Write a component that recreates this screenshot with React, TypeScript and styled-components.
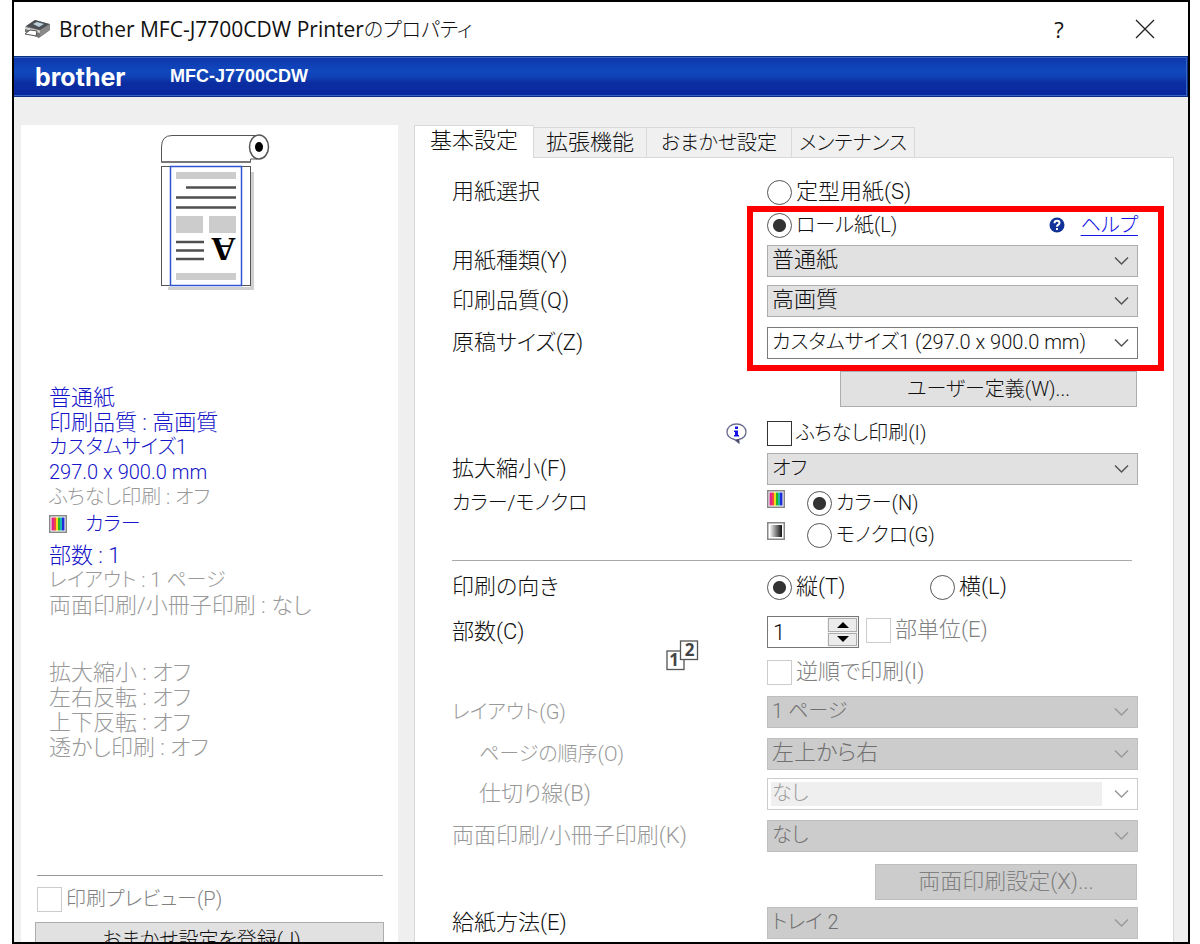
import React, { useState } from "react";
import styled, { createGlobalStyle, css } from "styled-components";

const ink = "#111";
const faded = "#999";
const accent = "#1414c8";

const GlobalStyle = createGlobalStyle`
  *, *::before, *::after { box-sizing: border-box; }
  html, body { margin: 0; background: #fff; }
  body, button, input, select {
    font-family: Roboto, "Noto Sans CJK JP", sans-serif;
    font-size: 22px;
    font-weight: 300;
    font-feature-settings: "palt";
    color: ${ink};
  }
`;

const kanaSize = css<{ $kana?: boolean }>`
  font-size: ${(p) => (p.$kana ? "20px" : "22px")};
`;

const Window = styled.div`
  display: flex;
  flex-direction: column;
  height: 100vh;
  margin: 0 10px 0 12px;
  border: 2px solid #000;
  overflow: hidden;
  background: #efefef;
`;

const TitleBar = styled.header`
  display: flex;
  flex: none;
  align-items: center;
  height: 54px;
  padding: 0 32px 0 10px;
  background: #fff;
`;

const Title = styled.h1`
  flex: 1;
  margin: 0 0 0 8px;
  font-family: "Open Sans", "Noto Sans CJK JP", sans-serif;
  font-size: 21px;
  font-weight: 400;
  line-height: 30px;
`;

const TitleKana = styled.span`
  font-size: 20px;
  font-weight: 300;
`;

const CaptionButton = styled.button`
  display: grid;
  place-items: center;
  width: 22px;
  height: 30px;
  margin-left: 64px;
  padding: 0;
  border: 0;
  background: none;
  font-family: "Open Sans", sans-serif;
  font-weight: 400;
`;

const BrandBar = styled.div`
  display: flex;
  flex: none;
  align-items: center;
  gap: 47px;
  height: 41px;
  padding-left: 21px;
  border: 1px solid #0b2f86;
  border-left: 0;
  box-shadow: inset -1px 1px 0 #3565c0, inset 0 -1px 0 #3565c0;
  background: linear-gradient(#0f35aa 0%, #1048be 35%, #1040b4 52%, #0b2ea2 65%, #0a279c 100%);
  color: #fff;
`;

const BrandLogo = styled.span`
  width: 88px;
  font-family: Inter, sans-serif;
  font-size: 25px;
  font-weight: 700;
  line-height: 30px;
`;

const ModelName = styled.span`
  font-family: "Liberation Sans", sans-serif;
  font-size: 18px;
  font-weight: 700;
`;

const Content = styled.div`
  display: grid;
  grid-template-columns: 377px minmax(0, 1fr);
  gap: 16px;
  flex: 1;
  padding: 28px 14px 0 7px;
`;

const Sidebar = styled.aside`
  padding: 8px 14px 0;
  background: #fff;
`;

const Preview = styled.svg`
  display: block;
  width: 112px;
  height: 160px;
  margin-left: 124px;
`;

const Summary = styled.ul`
  margin: 92px 0 0 14px;
  padding: 0;
  list-style: none;
`;

const SummaryLine = styled.li<{ $active?: boolean; $spaced?: boolean; $kana?: boolean }>`
  ${kanaSize}
  height: 25px;
  margin-top: ${(p) => (p.$spaced ? "42px" : "0")};
  line-height: 25px;
  white-space: nowrap;
  color: ${(p) => (p.$active ? accent : faded)};
`;

const ColorLine = styled(SummaryLine)`
  display: flex;
  align-items: center;
  gap: 18px;
  height: 28px;
  margin-bottom: 5px;
`;

const SideRule = styled.hr`
  height: 1px;
  margin: 115px 1px 7px 2px;
  border: 0;
  background: #999;
`;

const Main = styled.main`
  display: flex;
  flex-direction: column;
`;

const Tabs = styled.div`
  display: flex;
  align-items: flex-end;
  height: 32px;
`;

const Tab = styled.button<{ $active?: boolean; $width: number; $kana?: boolean }>`
  ${kanaSize}
  width: ${(p) => p.$width}px;
  height: 30px;
  padding: 0;
  border: 1px solid #d9d9d9;
  border-width: 1px 1px 0 0;
  background: #f0f0f0;
  line-height: 28px;
  white-space: nowrap;
  ${(p) =>
    p.$active &&
    css`
      position: relative;
      height: 33px;
      margin-bottom: -1px;
      padding-bottom: 2px;
      border-left-width: 1px;
      background: #fff;
    `}
`;

const Panel = styled.form`
  flex: 1;
  padding: 18px 35px 0 37px;
  border: 1px solid #d9d9d9;
  border-bottom: 0;
  background: #fff;
`;

const Row = styled.div<{ $gap?: number }>`
  display: grid;
  grid-template-columns: 315px minmax(0, 1fr);
  align-items: center;
  min-height: 32px;
  margin-top: ${(p) => p.$gap ?? 0}px;
`;

const FieldLabel = styled.label<{ $faded?: boolean; $indent?: boolean; $kana?: boolean }>`
  ${kanaSize}
  padding-left: ${(p) => (p.$indent ? "27px" : "0")};
  line-height: 32px;
  white-space: nowrap;
  color: ${(p) => (p.$faded ? faded : ink)};
`;

const Highlighted = styled.section`
  position: relative;
  &::after {
    content: "";
    position: absolute;
    z-index: 1;
    top: -3px;
    right: -26px;
    bottom: -12px;
    left: 295px;
    border: 6px solid #f00;
    pointer-events: none;
  }
`;

const SelectBox = styled.div`
  position: relative;
  svg {
    position: absolute;
    top: 11px;
    right: 9px;
    pointer-events: none;
  }
`;

const StyledSelect = styled.select<{ $plain?: boolean; $kana?: boolean }>`
  ${kanaSize}
  display: block;
  appearance: none;
  width: 100%;
  height: 32px;
  padding: 0 36px 3px 4px;
  border: 1px solid ${(p) => (p.$plain ? "#7a7a7a" : "#adadad")};
  border-radius: 0;
  background: ${(p) => (p.$plain ? "#fff" : "#e1e1e1")};
  opacity: 1;
  &:disabled {
    border-color: ${(p) => (p.$plain ? "#ccc" : "#bfbfbf")};
    color: ${(p) => (p.$plain ? "#9a9a9a" : "#707070")};
    background: ${(p) =>
      p.$plain
        ? "linear-gradient(#efefef, #efefef) 3px 3px / calc(100% - 38px) calc(100% - 6px) no-repeat #fff"
        : "#ccc"};
  }
`;

const PushButton = styled.button<{ $width?: string; $kana?: boolean }>`
  ${kanaSize}
  display: block;
  width: ${(p) => p.$width ?? "100%"};
  height: 36px;
  margin: 0 1px 0 auto;
  padding: 0;
  border: 1px solid #adadad;
  background: #e1e1e1;
  line-height: 32px;
  white-space: nowrap;
  &:disabled {
    border-color: #bfbfbf;
    background: #ccc;
    color: #808080;
  }
`;

const SideButton = styled(PushButton)`
  width: 100%;
  margin: 7px 0 0;
  padding-right: 16px;
`;

const Choice = styled.label<{ $faded?: boolean; $kana?: boolean }>`
  ${kanaSize}
  display: flex;
  align-items: center;
  gap: 4px;
  height: 32px;
  line-height: 32px;
  white-space: nowrap;
  color: ${(p) => (p.$faded ? "#808080" : ink)};
`;

const SideChoice = styled(Choice)`
  margin-left: 2px;
`;

const Radio = styled.input.attrs({ type: "radio" })`
  appearance: none;
  flex: none;
  width: 25px;
  height: 25px;
  margin: 0;
  border: 1px solid #555;
  border-radius: 50%;
  background: #fff;
  &:checked {
    background: radial-gradient(circle, #333 0 6px, #fff 7px);
  }
`;

const Tick = styled.input.attrs({ type: "checkbox" })`
  appearance: none;
  flex: none;
  width: 25px;
  height: 25px;
  margin: 0;
  border: 1px solid #333;
  background: #fff;
  &:checked {
    background: #333;
    box-shadow: inset 0 0 0 5px #fff;
  }
  &:disabled {
    border-color: #ccc;
  }
`;

const SpreadRow = styled.div`
  display: flex;
  align-items: center;
  justify-content: space-between;
`;

const HelpArea = styled.span`
  display: flex;
  align-items: center;
  gap: 16px;
`;

const HelpLink = styled.a`
  color: #1414e6;
  font-size: 20px;
  line-height: 28px;
  text-decoration-thickness: 1px;
  text-underline-offset: 3px;
`;

const NoteCell = styled.span`
  display: flex;
  justify-content: flex-end;
  padding-right: 20px;
`;

const ColorChoice = styled.div`
  display: flex;
  align-items: flex-start;
  gap: 22px;
  > svg {
    margin-top: 3px;
  }
`;

const Rule = styled.hr`
  height: 1px;
  margin: 9px 6px 0 0;
  border: 0;
  background: #aaa;
`;

const OrientationChoices = styled.div`
  display: grid;
  grid-template-columns: 163px 1fr;
`;

const CopiesGrid = styled.div`
  display: grid;
  grid-template-columns: 315px minmax(0, 1fr);
  margin-top: 13px;
`;

const CopiesCell = styled.div`
  display: flex;
  justify-content: space-between;
  align-items: flex-start;
  padding-right: 68px;
  svg {
    margin-top: 24px;
  }
`;

const CopiesControls = styled.div`
  display: flex;
  flex-direction: column;
  align-items: flex-start;
  gap: 8px;
`;

const CopiesLine = styled.div`
  display: flex;
  align-items: flex-start;
  gap: 7px;
`;

const CollateChoice = styled(Choice)`
  height: 28px;
  line-height: 28px;
`;

const Spinner = styled.div`
  display: flex;
  width: 92px;
  height: 32px;
  border: 1px solid #777;
  background: #fff;
`;

const CopiesInput = styled.input`
  flex: 1;
  width: 0;
  padding: 0 0 0 5px;
  border: 0;
  outline: 0;
  background: none;
`;

const SpinButtons = styled.div`
  display: grid;
  gap: 1px;
  width: 31px;
  padding: 1px;
  background: #f4f4f4;
`;

const SpinButton = styled.button`
  display: grid;
  place-items: center;
  padding: 0;
  border: 1px solid #adadad;
  background: #ececec;
`;

const PrinterIcon = () => (
  <svg width="27" height="20" viewBox="0 0 27 20" aria-hidden="true">
    <path d="M1 8 11 1 26 5 26 11 15 19 1 13Z" fill="#777" />
    <path d="M2 7 11 1 25 5 16 11Z" fill="#4c5054" />
    <path d="M9 5 13 3 20 5 15 8Z" fill="#bcd0dc" />
    <path d="M16 11 26 6 26 11 16 18Z" fill="#8a8a8a" />
    <path d="M1 8 16 11.500 16 14 1 10Z" fill="#d5d5d5" />
    <path d="M6 11 13 12 12 17 1 15Z" fill="#fff" stroke="#555" strokeWidth="1" />
  </svg>
);

const RollPreview = () => (
  <Preview viewBox="0 0 112 160" role="img" aria-label="preview">
    <path d="M94 39h1v118H9v-3h82V39z" fill="#d0d0d0" />
    <path d="M2.500 29V14Q2.500 2.500 13 2.500H98V26H91.500V29Z" fill="#fff" stroke="#555" />
    <path d="M2 29H92" stroke="#777" strokeWidth="2" />
    <ellipse cx="100" cy="14" rx="9.500" ry="12" fill="#fff" stroke="#555" strokeWidth="1.500" />
    <ellipse cx="100" cy="14" rx="4" ry="5" />
    <rect x="2.500" y="33.500" width="89" height="119" fill="#fff" stroke="#555" />
    <rect x="11.500" y="33.500" width="71" height="119" fill="#fff" stroke="#2f55d4" strokeWidth="1.500" />
    <g fill="#ccc">
      <rect x="17" y="39" width="60" height="7" />
      <rect x="17" y="83" width="27" height="17" />
      <rect x="50" y="83" width="27" height="17" />
      <rect x="17" y="140" width="60" height="7" />
    </g>
    <path d="M27 54.500H77M17 64.500H77M17 74.500H77M17 109H45M17 117.500H45M17 126H45" stroke="#505050" strokeWidth="2.500" />
    <text
      x="-64.500"
      y="-105"
      transform="rotate(180)"
      textAnchor="middle"
      fontFamily="Liberation Serif, serif"
      fontWeight="700"
      fontSize="34"
    >
      A
    </text>
  </Preview>
);

const ColorSwatch = () => (
  <svg width="18" height="18" viewBox="0 0 18 18" aria-hidden="true">
    <rect x="0.750" y="0.750" width="16.500" height="16.500" fill="#fff" stroke="#888" strokeWidth="1.500" />
    <rect x="2.500" y="2.500" width="2.500" height="13" fill="#e2238a" />
    <rect x="5" y="2.500" width="2" height="13" fill="#f0483c" />
    <rect x="7" y="2.500" width="2" height="13" fill="#f2dc1e" />
    <rect x="9" y="2.500" width="2" height="13" fill="#28b428" />
    <rect x="11" y="2.500" width="2" height="13" fill="#18b8b0" />
    <rect x="13" y="2.500" width="2.500" height="13" fill="#1c2cd8" />
  </svg>
);

const MonoSwatch = () => (
  <svg width="18" height="18" viewBox="0 0 18 18" aria-hidden="true">
    <defs>
      <linearGradient id="mono">
        <stop offset="0" stopColor="#f4f4f4" />
        <stop offset="1" stopColor="#111" />
      </linearGradient>
    </defs>
    <rect x="0.750" y="0.750" width="16.500" height="16.500" fill="#fff" stroke="#888" strokeWidth="1.500" />
    <rect x="3" y="3" width="12" height="12" fill="url(#mono)" />
  </svg>
);

const HelpIcon = () => (
  <svg width="16" height="16" viewBox="0 0 16 16" aria-hidden="true">
    <circle cx="8" cy="8" r="7.500" fill="#12329a" />
    <path d="M5.500 6.200Q5.500 3.800 8 3.800T10.500 6Q10.500 7.200 9 8Q8 8.500 8 9.800" fill="none" stroke="#fff" strokeWidth="2" />
    <rect x="7" y="11" width="2" height="2" fill="#fff" />
  </svg>
);

const InfoIcon = () => (
  <svg width="21" height="21" viewBox="0 0 21 21" aria-hidden="true">
    <path d="M10.500 1C5 1 1 4.500 1 9C1 13 4.500 15.500 8.500 16.500L13 20L12.800 16.500C17 15.500 20 13 20 9C20 4.500 16 1 10.500 1Z" fill="#fff" stroke="#6a6c90" strokeWidth="1.300" />
    <path d="M9 16.500L13 20L12.800 16" fill="#44465e" />
    <rect x="9" y="3.500" width="3" height="2.500" fill="#1414e6" />
    <path d="M8 7.500H12V12H13V13.500H8V12H9V9H8Z" fill="#1414e6" />
  </svg>
);

const CollateIcon = () => (
  <svg width="33" height="31" viewBox="0 0 33 31" aria-hidden="true">
    <g fill="#fff" stroke="#555" strokeWidth="1.300">
      <rect x="1" y="11" width="17" height="18.500" />
      <rect x="14.500" y="1" width="17" height="18.500" />
    </g>
    <g fill="#444" fontFamily="Open Sans, sans-serif" fontWeight="700" fontSize="17" textAnchor="middle">
      <text x="8" y="26">1</text>
      <text x="23.500" y="16">2</text>
    </g>
  </svg>
);

type ChoiceListProps = { id: string; value: string; disabled?: boolean; plain?: boolean; kana?: boolean };

const ChoiceList = ({ id, value, disabled, plain, kana }: ChoiceListProps) => (
  <SelectBox>
    <StyledSelect id={id} disabled={disabled} $plain={plain} $kana={kana} defaultValue={value}>
      <option>{value}</option>
    </StyledSelect>
    <svg width="15" height="10" viewBox="0 0 15 10" aria-hidden="true">
      <path d="M1 1.500 7.500 8 14 1.500" fill="none" stroke={disabled ? "#999" : "#555"} strokeWidth="1.500" />
    </svg>
  </SelectBox>
);

type SelectRowProps = ChoiceListProps & {
  label: string;
  gap: number;
  faded?: boolean;
  indent?: boolean;
  kanaLabel?: boolean;
};

const SelectRow = ({ label, gap, faded: dim, indent, kanaLabel, ...list }: SelectRowProps) => (
  <Row $gap={gap}>
    <FieldLabel htmlFor={list.id} $faded={dim} $indent={indent} $kana={kanaLabel}>
      {label}
    </FieldLabel>
    <ChoiceList {...list} />
  </Row>
);

export default function App() {
  const [copies, setCopies] = useState(1);

  return (
    <>
      <GlobalStyle />
      <Window>
        <TitleBar>
          <PrinterIcon />
          <Title>
            Brother MFC-J7700CDW Printer<TitleKana>のプロパティ</TitleKana>
          </Title>
          <CaptionButton type="button">?</CaptionButton>
          <CaptionButton type="button" aria-label="close">
            <svg width="20" height="20" viewBox="0 0 20 20">
              <path d="M1 1 19 19M19 1 1 19" stroke="#222" strokeWidth="1.300" />
            </svg>
          </CaptionButton>
        </TitleBar>
        <BrandBar>
          <BrandLogo>brother</BrandLogo>
          <ModelName>MFC-J7700CDW</ModelName>
        </BrandBar>
        <Content>
          <Sidebar>
            <RollPreview />
            <Summary>
              <SummaryLine $active>普通紙</SummaryLine>
              <SummaryLine $active>印刷品質 : 高画質</SummaryLine>
              <SummaryLine $active $kana>カスタムサイズ1</SummaryLine>
              <SummaryLine $active $kana>297.0 x 900.0 mm</SummaryLine>
              <SummaryLine $kana>ふちなし印刷 : オフ</SummaryLine>
              <ColorLine $active $kana>
                <ColorSwatch />
                カラー
              </ColorLine>
              <SummaryLine $active>部数 : 1</SummaryLine>
              <SummaryLine $kana>レイアウト : 1 ページ</SummaryLine>
              <SummaryLine>両面印刷/小冊子印刷 : なし</SummaryLine>
              <SummaryLine $spaced>拡大縮小 : オフ</SummaryLine>
              <SummaryLine>左右反転 : オフ</SummaryLine>
              <SummaryLine>上下反転 : オフ</SummaryLine>
              <SummaryLine>透かし印刷 : オフ</SummaryLine>
            </Summary>
            <SideRule />
            <SideChoice $faded $kana>
              <Tick disabled />
              印刷プレビュー(P)
            </SideChoice>
            <SideButton type="button" $kana>
              おまかせ設定を登録(J)
            </SideButton>
          </Sidebar>
          <Main>
            <Tabs role="tablist">
              <Tab type="button" role="tab" aria-selected $active $width={120}>
                基本設定
              </Tab>
              <Tab type="button" role="tab" $width={113}>
                拡張機能
              </Tab>
              <Tab type="button" role="tab" $width={145} $kana>
                おまかせ設定
              </Tab>
              <Tab type="button" role="tab" $width={123} $kana>
                メンテナンス
              </Tab>
            </Tabs>
            <Panel>
              <Row>
                <FieldLabel as="span">用紙選択</FieldLabel>
                <Choice>
                  <Radio name="paper" />
                  定型用紙(S)
                </Choice>
              </Row>
              <Highlighted>
                <Row $gap={1}>
                  <span />
                  <SpreadRow>
                    <Choice $kana>
                      <Radio name="paper" defaultChecked />
                      ロール紙(L)
                    </Choice>
                    <HelpArea>
                      <HelpIcon />
                      <HelpLink href="#help">ヘルプ</HelpLink>
                    </HelpArea>
                  </SpreadRow>
                </Row>
                <SelectRow id="media" label="用紙種類(Y)" gap={4} value="普通紙" />
                <SelectRow id="quality" label="印刷品質(Q)" gap={8} value="高画質" />
                <SelectRow
                  id="size"
                  label="原稿サイズ(Z)"
                  gap={10}
                  value="カスタムサイズ1 (297.0 x 900.0 mm)"
                  plain
                  kana
                />
              </Highlighted>
              <Row $gap={12}>
                <span />
                <PushButton type="button" $width="297px" $kana>
                  ユーザー定義(W)...
                </PushButton>
              </Row>
              <Row $gap={10}>
                <NoteCell>
                  <InfoIcon />
                </NoteCell>
                <Choice $kana>
                  <Tick />
                  ふちなし印刷(I)
                </Choice>
              </Row>
              <SelectRow id="scaling" label="拡大縮小(F)" gap={4} value="オフ" kana />
              <Row $gap={2}>
                <FieldLabel as="span" $kana>
                  カラー/モノクロ
                </FieldLabel>
                <ColorChoice>
                  <ColorSwatch />
                  <Choice $kana>
                    <Radio name="color" defaultChecked />
                    カラー(N)
                  </Choice>
                </ColorChoice>
              </Row>
              <Row>
                <span />
                <ColorChoice>
                  <MonoSwatch />
                  <Choice $kana>
                    <Radio name="color" />
                    モノクロ(G)
                  </Choice>
                </ColorChoice>
              </Row>
              <Rule />
              <Row $gap={10}>
                <FieldLabel as="span">印刷の向き</FieldLabel>
                <OrientationChoices>
                  <Choice>
                    <Radio name="orientation" defaultChecked />
                    縦(T)
                  </Choice>
                  <Choice>
                    <Radio name="orientation" />
                    横(L)
                  </Choice>
                </OrientationChoices>
              </Row>
              <CopiesGrid>
                <CopiesCell>
                  <FieldLabel htmlFor="copies">部数(C)</FieldLabel>
                  <CollateIcon />
                </CopiesCell>
                <CopiesControls>
                  <CopiesLine>
                    <Spinner>
                      <CopiesInput
                        id="copies"
                        inputMode="numeric"
                        value={copies}
                        onChange={(e) => setCopies(Number(e.target.value) || 1)}
                      />
                      <SpinButtons>
                        <SpinButton type="button" aria-label="up" onClick={() => setCopies(copies + 1)}>
                          <svg width="12" height="6" viewBox="0 0 12 6">
                            <path d="M0 6 6 0 12 6Z" />
                          </svg>
                        </SpinButton>
                        <SpinButton type="button" aria-label="down" onClick={() => setCopies(Math.max(1, copies - 1))}>
                          <svg width="12" height="6" viewBox="0 0 12 6">
                            <path d="M0 0 6 6 12 0Z" />
                          </svg>
                        </SpinButton>
                      </SpinButtons>
                    </Spinner>
                    <CollateChoice $faded>
                      <Tick disabled />
                      部単位(E)
                    </CollateChoice>
                  </CopiesLine>
                  <Choice $faded>
                    <Tick disabled />
                    逆順で印刷(I)
                  </Choice>
                </CopiesControls>
              </CopiesGrid>
              <SelectRow id="layout" label="レイアウト(G)" gap={8} value="1 ページ" faded disabled kana kanaLabel />
              <SelectRow id="order" label="ページの順序(O)" gap={10} value="左上から右" faded indent disabled kanaLabel />
              <SelectRow id="border" label="仕切り線(B)" gap={8} value="なし" faded indent disabled plain kana />
              <SelectRow id="duplex" label="両面印刷/小冊子印刷(K)" gap={10} value="なし" faded disabled kana />
              <Row $gap={12}>
                <span />
                <PushButton type="button" $width="262px" disabled>
                  両面印刷設定(X)...
                </PushButton>
              </Row>
              <SelectRow id="source" label="給紙方法(E)" gap={7} value="トレイ 2" disabled kana />
            </Panel>
          </Main>
        </Content>
      </Window>
    </>
  );
}
